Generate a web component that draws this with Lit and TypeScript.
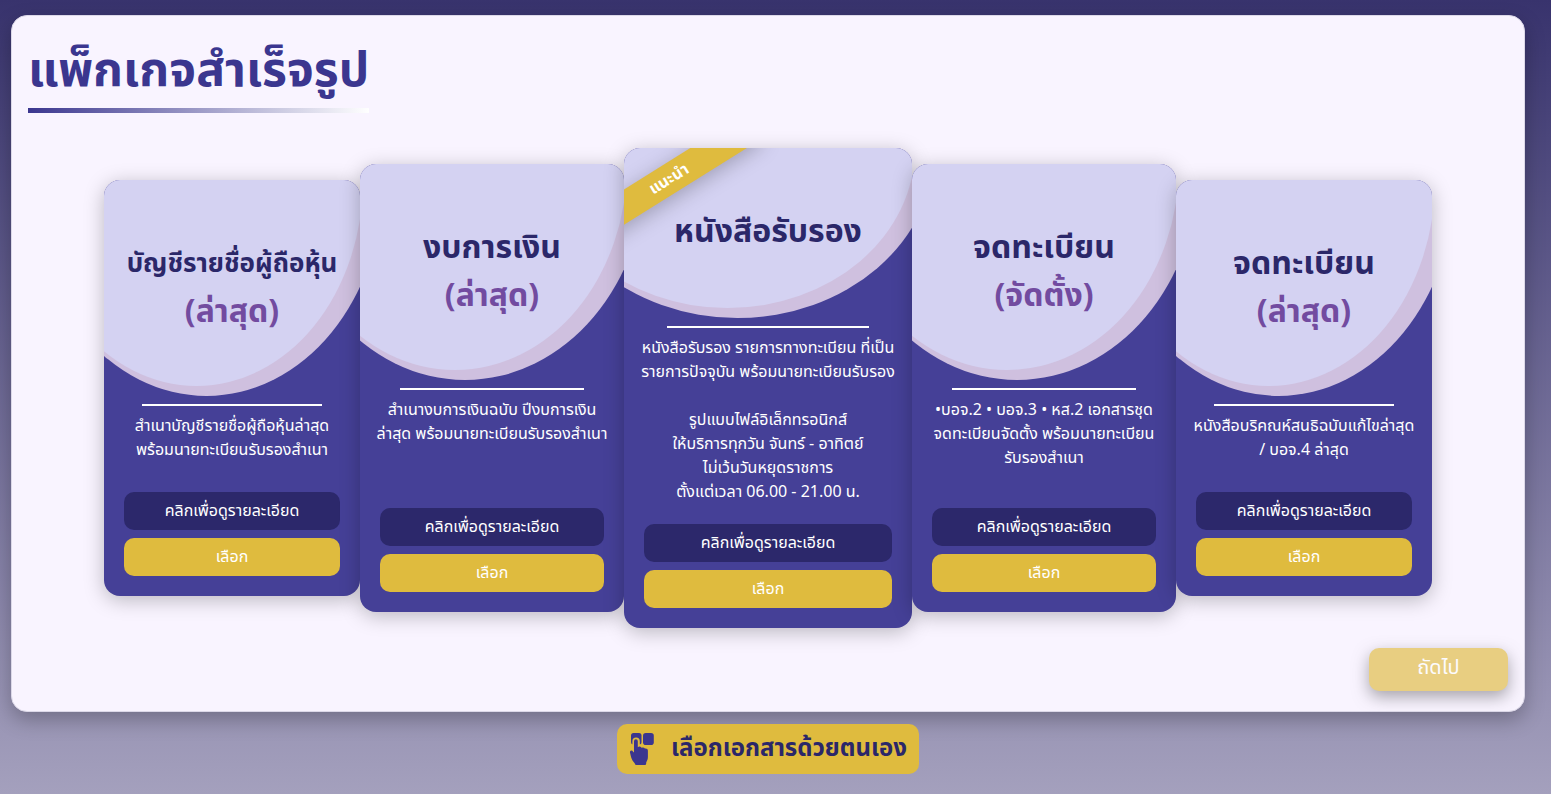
import { LitElement, html, css, nothing } from "lit";
import { customElement, property } from "lit/decorators.js";
import { classMap } from "lit/directives/class-map.js";

interface Package {
  size: "small" | "medium" | "large";
  title: string;
  longTitle?: boolean;
  note?: string;
  badge?: string;
  text: string;
}

const PACKAGES: Package[] = [
  {
    size: "small",
    title: "บัญชีรายชื่อผู้ถือหุ้น",
    longTitle: true,
    note: "(ล่าสุด)",
    text: "สำเนาบัญชีรายชื่อผู้ถือหุ้นล่าสุด\nพร้อมนายทะเบียนรับรองสำเนา",
  },
  {
    size: "medium",
    title: "งบการเงิน",
    note: "(ล่าสุด)",
    text: "สำเนางบการเงินฉบับ ปีงบการเงิน\nล่าสุด พร้อมนายทะเบียนรับรองสำเนา",
  },
  {
    size: "large",
    title: "หนังสือรับรอง",
    badge: "แนะนำ",
    text: "หนังสือรับรอง รายการทางทะเบียน ที่เป็น\nรายการปัจจุบัน พร้อมนายทะเบียนรับรอง\n\nรูปแบบไฟล์อิเล็กทรอนิกส์\nให้บริการทุกวัน จันทร์ - อาทิตย์\nไม่เว้นวันหยุดราชการ\nตั้งแต่เวลา 06.00 - 21.00 น.",
  },
  {
    size: "medium",
    title: "จดทะเบียน",
    note: "(จัดตั้ง)",
    text: "•บอจ.2 • บอจ.3 • หส.2 เอกสารชุด\nจดทะเบียนจัดตั้ง พร้อมนายทะเบียน\nรับรองสำเนา",
  },
  {
    size: "small",
    title: "จดทะเบียน",
    note: "(ล่าสุด)",
    text: "หนังสือบริคณห์สนธิฉบับแก้ไขล่าสุด\n/ บอจ.4 ล่าสุด",
  },
];

@customElement("package-card")
export class PackageCard extends LitElement {
  @property({ attribute: false }) data!: Package;

  static styles = css`
    :host {
      display: block;
    }
    .card {
      position: relative;
      box-sizing: border-box;
      display: flex;
      flex-direction: column;
      overflow: hidden;
      border-radius: 16px;
      background: #454097;
      color: #fff;
      text-align: center;
      box-shadow: 0 4px 20px rgba(0, 0, 0, 0.25);
    }
    .small {
      width: 256px;
      min-height: 416px;
    }
    .medium {
      width: 264px;
      min-height: 448px;
    }
    .large {
      width: 288px;
      min-height: 480px;
    }
    .head {
      position: relative;
      box-sizing: border-box;
      height: 206px;
      padding-top: 60px;
    }
    .large .head {
      height: 160px;
    }
    .head::before {
      content: "";
      position: absolute;
      bottom: 0;
      left: -29%;
      width: 130%;
      height: 200%;
      border-radius: 50%;
      background: #d4d2f2;
      box-shadow: 10px 0 0 10px #cfc0df;
    }
    .title,
    .note {
      position: relative;
      margin: 0;
      font-size: 32px;
      line-height: 48px;
      font-weight: 700;
      color: #2b2769;
    }
    .title.long {
      font-size: 26px;
    }
    .note {
      color: #724ba0;
    }
    .badge {
      position: absolute;
      top: 16px;
      left: -55px;
      width: 200px;
      font-size: 16px;
      line-height: 30px;
      font-weight: 700;
      background: #dfbb3e;
      transform: rotate(-32deg);
      box-shadow: 0 4px 20px rgba(0, 0, 0, 0.25);
    }
    .rule {
      width: 70%;
      height: 2px;
      margin: 18px auto 8px;
      border: 0;
      background: #fff;
    }
    .text {
      margin: 0;
      font-size: 16px;
      line-height: 24px;
      white-space: pre;
    }
    .actions {
      display: grid;
      gap: 8px;
      margin-top: auto;
      padding: 20px;
    }
    button {
      height: 38px;
      padding: 0;
      border: 0;
      border-radius: 10px;
      font: inherit;
      font-size: 16px;
      line-height: 24px;
      color: #fff;
      cursor: pointer;
    }
    .details {
      background: #2c286b;
    }
    .choose {
      background: #dfbb3e;
    }
  `;

  render() {
    const d = this.data;
    return html`
      <article class="card ${d.size}">
        <div class="head">
          ${d.badge ? html`<div class="badge">${d.badge}</div>` : nothing}
          <h2 class=${classMap({ title: true, long: !!d.longTitle })}>${d.title}</h2>
          ${d.note ? html`<p class="note">${d.note}</p>` : nothing}
        </div>
        <hr class="rule" />
        <p class="text">${d.text}</p>
        <div class="actions">
          <button class="details" type="button">คลิกเพื่อดูรายละเอียด</button>
          <button class="choose" type="button">เลือก</button>
        </div>
      </article>
    `;
  }
}

@customElement("app-root")
export class AppRoot extends LitElement {
  static styles = css`
    :host {
      display: block;
      box-sizing: border-box;
      min-height: 100vh;
      padding: 15px 26px 20px 11px;
      font-family: "Noto Sans Thai", "Noto Sans", sans-serif;
      background: linear-gradient(#38336d, #a4a0bd);
    }
    .page {
      display: flex;
      flex-direction: column;
      align-items: center;
      gap: 12px;
    }
    .panel {
      box-sizing: border-box;
      width: 100%;
      display: flex;
      flex-direction: column;
      padding: 16px 16px 20px;
      border: 1px solid #dcd8e8;
      border-radius: 16px;
      background: #f9f4ff;
      box-shadow: 0 8px 20px rgba(0, 0, 0, 0.25);
    }
    .heading {
      align-self: flex-start;
      margin: 0;
      padding: 4px 0 0;
      font-size: 48px;
      line-height: 72px;
      font-weight: 700;
      color: #3b368f;
    }
    .heading::after {
      content: "";
      display: block;
      height: 5px;
      background: linear-gradient(90deg, #3b368f, #fff);
    }
    .cards {
      display: flex;
      justify-content: center;
      align-items: center;
      padding: 35px 0 20px;
    }
    .next {
      align-self: flex-end;
      width: 139px;
      height: 43px;
      padding: 0 0 4px;
      border: 0;
      border-radius: 10px;
      font: inherit;
      font-size: 20px;
      line-height: 30px;
      color: #fff;
      background: #dfbb3e;
      opacity: 0.65;
      box-shadow: 0 6px 16px rgba(0, 0, 0, 0.5);
    }
    .custom {
      display: flex;
      align-items: center;
      gap: 16px;
      height: 50px;
      padding: 0 12px;
      border: 0;
      border-radius: 10px;
      font: inherit;
      font-size: 24px;
      line-height: 36px;
      font-weight: 700;
      color: #2b2769;
      background: #dfbb3e;
      cursor: pointer;
    }
    .icon {
      width: 26px;
      height: 34px;
      fill: #3b368f;
    }
    .halo {
      fill: #dfbb3e;
    }
  `;

  render() {
    return html`
      <main class="page" lang="th">
        <section class="panel">
          <h1 class="heading">แพ็กเกจสำเร็จรูป</h1>
          <div class="cards">
            ${PACKAGES.map((p) => html`<package-card .data=${p}></package-card>`)}
          </div>
          <button class="next" type="button" disabled>ถัดไป</button>
        </section>
        <button class="custom" type="button">
          <svg class="icon" viewBox="0 0 26 34" aria-hidden="true">
            <rect x="2" y="1" width="10.500" height="11.500" rx="2.500" />
            <rect x="14" y="1" width="10.800" height="12" rx="2.800" />
            <path class="halo" d="M3.400 13V9.200a3.700 3.700 0 0 1 7.400 0V13z" />
            <path
              d="M5 20.500V9.200a1.900 1.900 0 0 1 3.800 0v6q.8-.7 2-.6 1.400.2 1.700 1.100 2.500-.7 3.400.9 3-.4 3 2v6.400q0 2-.8 3.500l-.9 2v1q0 1.500-1.500 1.500H7.500q-1.500 0-1.700-1.500l-2.300-3q-1.200-2-1.700-4.500L1 20.500q-.2-1.800 1.200-2 1.400 0 1.900 1.200z"
            />
          </svg>
          <span>เลือกเอกสารด้วยตนเอง</span>
        </button>
      </main>
    `;
  }
}
